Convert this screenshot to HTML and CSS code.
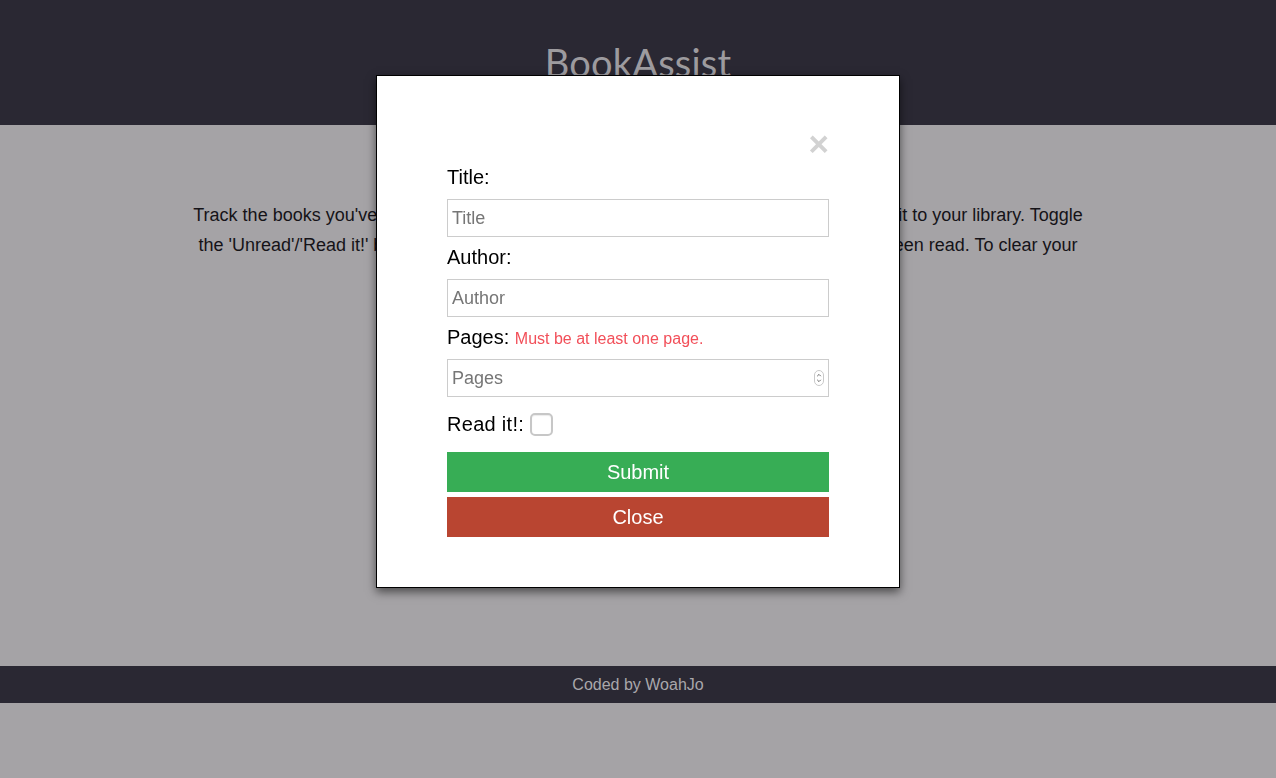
FILE: index.html
```html
<!DOCTYPE html>
<html lang="en">
<head>
<meta charset="utf-8">
<title>BookAssist</title>
<link rel="stylesheet" href="styles.css">
</head>
<body>
<div class="page">
  <header class="header">
    <h1 class="brand">BookAssist</h1>
  </header>
  <main class="main">
    <p class="intro">Track the books you've read and all the books you wish to read. Click 'New Book' to add it to your library. Toggle<br>the 'Unread'/'Read it!' button on each of your book cards to mark whether or not it has been read. To clear your<br>library, click the 'Clear All' button.</p>
  </main>
  <footer class="footer">Coded by WoahJo</footer>
</div>

<div class="overlay">
  <div class="modal">
    <div class="close-row"><span class="close-x">&times;</span></div>
    <form class="form">
      <label class="label" for="title">Title:</label>
      <input class="field" id="title" type="text" placeholder="Title">
      <label class="label" for="author">Author:</label>
      <input class="field" id="author" type="text" placeholder="Author">
      <label class="label" for="pages">Pages: <span class="error">Must be at least one page.</span></label>
      <div class="num-wrap">
        <input class="field num" id="pages" type="number" placeholder="Pages">
        <svg class="spinner" width="10" height="16" viewBox="0 0 10 16">
          <rect x="0.5" y="0.5" width="9" height="15" rx="4.5" fill="#fff" stroke="#c9c9c9"/>
          <path d="M3.2 6.2 L5 4.4 L6.8 6.2" fill="none" stroke="#6d6d6d" stroke-width="1"/>
          <path d="M3.2 9.8 L5 11.6 L6.8 9.8" fill="none" stroke="#6d6d6d" stroke-width="1"/>
        </svg>
      </div>
      <div class="check-row">
        <label class="label inline" for="read">Read it!:</label>
        <input class="check" id="read" type="checkbox">
      </div>
      <button class="btn submit" type="button">Submit</button>
      <button class="btn cancel" type="button">Close</button>
    </form>
  </div>
</div>
</body>
</html>
```
FILE: styles.css
```css
* { box-sizing: border-box; }
html, body {
  margin: 0;
  padding: 0;
  height: 100%;
}
body {
  background: #a5a3a6;
  font-family: "Liberation Sans", Arial, sans-serif;
  color: #141218;
}
.page {
  display: flex;
  flex-direction: column;
}
.header {
  height: 125px;
  background: #2a2833;
  display: flex;
  justify-content: center;
}
.brand {
  margin: 0;
  padding-top: 40px;
  font-family: "Lato", "Open Sans", sans-serif;
  font-weight: 400;
  font-size: 38px;
  line-height: 44px;
  color: #9d9b9f;
  letter-spacing: 0.2px;
}
.main {
  height: 541px;
  padding-top: 75px;
}
.intro {
  margin: 0 auto;
  text-align: center;
  font-size: 18px;
  line-height: 30px;
  color: #151318;
}
.footer {
  height: 37px;
  background: #2a2833;
  color: #a9a7ab;
  font-size: 16px;
  display: flex;
  align-items: center;
  justify-content: center;
}

.overlay {
  position: fixed;
  inset: 0;
  display: flex;
  justify-content: center;
  align-items: flex-start;
}
.modal {
  margin-top: 75px;
  width: 524px;
  height: 513px;
  background: #fff;
  border: 1px solid #000;
  box-shadow: 0 4px 9px rgba(0, 0, 0, 0.55);
  padding: 54px 70px 50px 70px;
}
.close-row {
  height: 28px;
  display: flex;
  justify-content: flex-end;
  margin-bottom: 7px;
}
.close-x {
  font-size: 35px;
  line-height: 28px;
  font-weight: bold;
  color: #d2d2d2;
}
.form {
  display: flex;
  flex-direction: column;
}
.label {
  display: block;
  height: 24px;
  font-size: 20px;
  line-height: 24px;
  color: #000;
  margin-bottom: 10px;
}
.label.inline {
  display: inline;
  height: auto;
  margin: 0;
  letter-spacing: 0.3px;
}
.error {
  font-size: 16px;
  line-height: 16px;
  color: #f24f59;
}
.field {
  display: block;
  width: 100%;
  height: 38px;
  border: 1px solid #cccccc;
  border-radius: 0;
  padding: 0 4px;
  font-family: "Liberation Sans", Arial, sans-serif;
  font-size: 18px;
  color: #222;
  background: #fff;
  margin: 0 0 8px 0;
  outline: none;
}
.field::placeholder {
  color: #767676;
}
.num-wrap {
  position: relative;
}
.num {
  -moz-appearance: textfield;
}
.num::-webkit-inner-spin-button,
.num::-webkit-outer-spin-button {
  -webkit-appearance: none;
  margin: 0;
}
.spinner {
  position: absolute;
  right: 5px;
  top: 11px;
}
.check-row {
  height: 38px;
  display: flex;
  align-items: center;
  gap: 6px;
  margin-bottom: 9px;
}
.check {
  -webkit-appearance: none;
  appearance: none;
  width: 23px;
  height: 23px;
  margin: 0;
  border: 2px solid #c7c7c7;
  border-radius: 5px;
  background: #fff;
  box-shadow: inset 0 1px 1px rgba(0,0,0,0.08);
}
.btn {
  display: block;
  width: 100%;
  height: 40px;
  border: none;
  border-radius: 0;
  color: #fff;
  font-family: "Liberation Sans", Arial, sans-serif;
  font-size: 20px;
  padding: 0;
  cursor: pointer;
}
.submit {
  background: #37ad55;
  margin-bottom: 5px;
}
.cancel {
  background: #b94531;
}
```
